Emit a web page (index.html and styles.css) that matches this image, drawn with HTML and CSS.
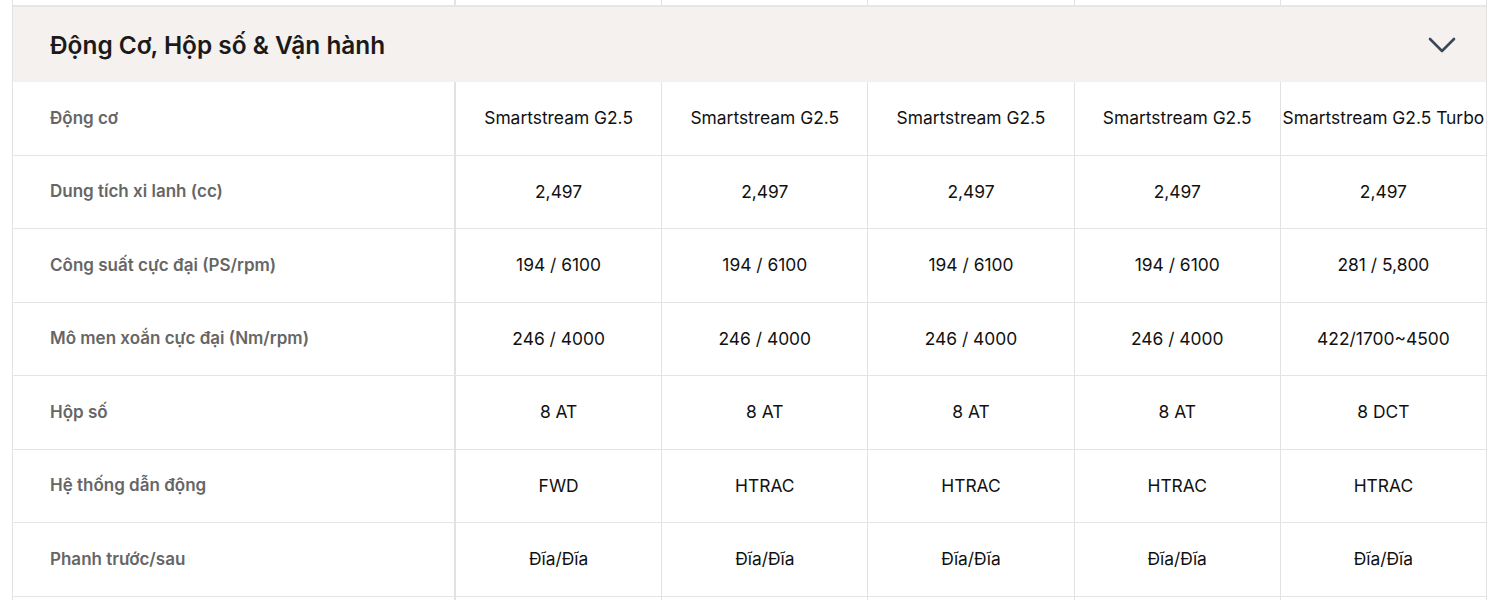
FILE: index.html
```html
<!DOCTYPE html>
<html lang="vi">
<head>
<meta charset="utf-8">
<link rel="stylesheet" href="styles.css">
</head>
<body>
<div class="spec">
  <div class="row row-top">
    <div class="cell label"></div><div class="cell"></div><div class="cell"></div><div class="cell"></div><div class="cell"></div><div class="cell"></div>
  </div>
  <div class="section-head">
    <h2 class="section-title">Động Cơ, Hộp số &amp; Vận hành</h2>
    <svg class="chevron" width="28" height="16" viewBox="0 0 28 16"><path d="M2 2 L14 14 L26 2" fill="none" stroke="#3a4757" stroke-width="2.6" stroke-linecap="round" stroke-linejoin="round"/></svg>
  </div>
  <div class="row">
    <div class="cell label">Động cơ</div><div class="cell">Smartstream G2.5</div><div class="cell">Smartstream G2.5</div><div class="cell">Smartstream G2.5</div><div class="cell">Smartstream G2.5</div><div class="cell">Smartstream G2.5 Turbo</div>
  </div>
  <div class="row">
    <div class="cell label">Dung tích xi lanh (cc)</div><div class="cell">2,497</div><div class="cell">2,497</div><div class="cell">2,497</div><div class="cell">2,497</div><div class="cell">2,497</div>
  </div>
  <div class="row">
    <div class="cell label">Công suất cực đại (PS/rpm)</div><div class="cell">194 / 6100</div><div class="cell">194 / 6100</div><div class="cell">194 / 6100</div><div class="cell">194 / 6100</div><div class="cell">281 / 5,800</div>
  </div>
  <div class="row">
    <div class="cell label">Mô men xoắn cực đại (Nm/rpm)</div><div class="cell">246 / 4000</div><div class="cell">246 / 4000</div><div class="cell">246 / 4000</div><div class="cell">246 / 4000</div><div class="cell">422/1700~4500</div>
  </div>
  <div class="row">
    <div class="cell label">Hộp số</div><div class="cell">8 AT</div><div class="cell">8 AT</div><div class="cell">8 AT</div><div class="cell">8 AT</div><div class="cell">8 DCT</div>
  </div>
  <div class="row">
    <div class="cell label">Hệ thống dẫn động</div><div class="cell">FWD</div><div class="cell">HTRAC</div><div class="cell">HTRAC</div><div class="cell">HTRAC</div><div class="cell">HTRAC</div>
  </div>
  <div class="row">
    <div class="cell label">Phanh trước/sau</div><div class="cell">Đĩa/Đĩa</div><div class="cell">Đĩa/Đĩa</div><div class="cell">Đĩa/Đĩa</div><div class="cell">Đĩa/Đĩa</div><div class="cell">Đĩa/Đĩa</div>
  </div>
  <div class="row">
    <div class="cell label"></div><div class="cell"></div><div class="cell"></div><div class="cell"></div><div class="cell"></div><div class="cell"></div>
  </div>
</div>
</body>
</html>
```

FILE: styles.css
```css
html, body {
  margin: 0;
  padding: 0;
  background: #fff;
}
body {
  font-family: "Inter", "Noto Sans", sans-serif;
  color: #111;
}
.spec {
  margin-left: 12px;
  width: 1475px;
  border-left: 1px solid #e2e2e2;
  border-right: 1px solid #e2e2e2;
  box-sizing: border-box;
}
.row {
  display: grid;
  grid-template-columns: 442px repeat(5, 1fr);
  height: 73.5px;
  border-bottom: 1px solid #e4e4e4;
  box-sizing: border-box;
}
.row-top {
  height: 7px;
  border-bottom: 2px solid #e6e6e6;
}
.cell {
  display: flex;
  align-items: center;
  justify-content: center;
  border-left: 1px solid #e2e2e2;
  font-size: 17.4px;
  color: #111;
  white-space: nowrap;
  padding-bottom: 1px;
}
.cell.label {
  border-left: none;
  border-right: 1px solid #e2e2e2;
  justify-content: flex-start;
  padding-left: 37px;
  font-size: 17px;
  font-weight: 600;
  color: #666;
}
.cell.label + .cell {
  border-left: 1px solid #e2e2e2;
}
.section-head {
  display: flex;
  align-items: center;
  justify-content: space-between;
  height: 75px;
  background: #f4f1ef;
  padding: 0 30px 0 37px;
}
.section-title {
  margin: 0;
  font-size: 24.4px;
  font-weight: 600;
  color: #1c1a19;
}
.chevron {
  display: block;
}
```
